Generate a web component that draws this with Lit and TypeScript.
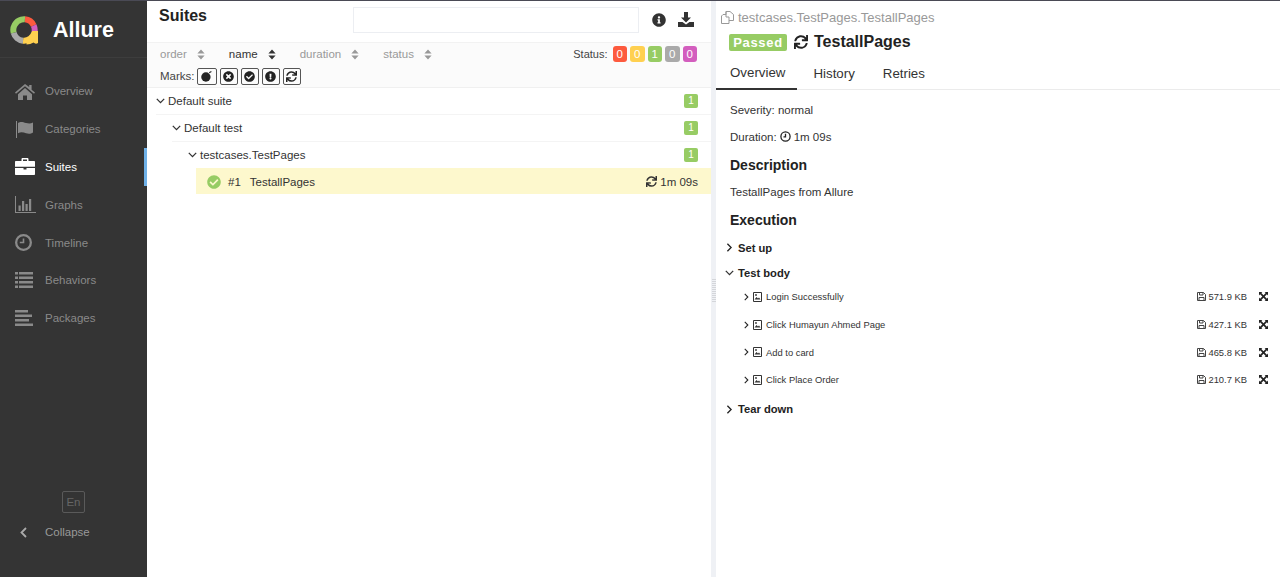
import { LitElement, html, css, svg } from "lit";
import { customElement } from "lit/decorators.js";

const SYNC = "M440.65 12.57l4 82.77A247.16 247.16 0 0 0 255.83 8C134.73 8 33.91 94.92 12.29 209.82A12 12 0 0 0 24.09 224h49.05a12 12 0 0 0 11.67-9.26 175.91 175.91 0 0 1 317-56.94l-101.46-4.86a12 12 0 0 0-12.57 12v47.41a12 12 0 0 0 12 12H500a12 12 0 0 0 12-12V12a12 12 0 0 0-12-12h-47.37a12 12 0 0 0-11.98 12.57zM255.83 432a175.61 175.61 0 0 1-146-77.8l101.8 4.87a12 12 0 0 0 12.57-12v-47.4a12 12 0 0 0-12-12H12a12 12 0 0 0-12 12V500a12 12 0 0 0 12 12h47.35a12 12 0 0 0 12-12.6l-4.15-82.57A247.17 247.17 0 0 0 255.83 504c121.11 0 221.93-86.92 243.55-201.82a12 12 0 0 0-11.8-14.18h-49.05a12 12 0 0 0-11.67 9.26A175.86 175.86 0 0 1 255.83 432z";
const CHECK = "M504 256c0 136.967-111.033 248-248 248S8 392.967 8 256 119.033 8 256 8s248 111.033 248 248zM227.314 387.314l184-184c6.248-6.248 6.248-16.379 0-22.627l-22.627-22.627c-6.248-6.249-16.379-6.249-22.628 0L216 308.118l-70.059-70.059c-6.248-6.248-16.379-6.248-22.628 0l-22.627 22.627c-6.248 6.248-6.248 16.379 0 22.627l104 104c6.249 6.249 16.379 6.249 22.628.001z";
const INFO = "M256 8C119.043 8 8 119.083 8 256c0 136.997 111.043 248 248 248s248-111.003 248-248C504 119.083 392.957 8 256 8zm0 110c23.196 0 42 18.804 42 42s-18.804 42-42 42-42-18.804-42-42 18.804-42 42-42zm56 254c0 6.627-5.373 12-12 12h-88c-6.627 0-12-5.373-12-12v-24c0-6.627 5.373-12 12-12h12v-64h-12c-6.627 0-12-5.373-12-12v-24c0-6.627 5.373-12 12-12h64c6.627 0 12 5.373 12 12v100h12c6.627 0 12 5.373 12 12v24z";
const TIMES = "M256 8C119 8 8 119 8 256s111 248 248 248 248-111 248-248S393 8 256 8zm121.6 313.1c4.7 4.7 4.7 12.3 0 17L338 377.6c-4.7 4.7-12.3 4.7-17 0L256 312l-65.1 65.6c-4.7 4.7-12.3 4.7-17 0L134.4 338c-4.7-4.7-4.7-12.3 0-17l65.6-65-65.6-65.1c-4.7-4.7-4.7-12.3 0-17l39.6-39.6c4.7-4.7 12.3-4.7 17 0l65 65.7 65.1-65.6c4.7-4.7 12.3-4.7 17 0l39.6 39.6c4.7 4.7 4.7 12.3 0 17L312 256l65.6 65.1z";
const EXCL = "M504 256c0 136.997-111.043 248-248 248S8 392.997 8 256C8 119.083 119.043 8 256 8s248 111.083 248 248zm-248 50c-25.405 0-46 20.595-46 46s20.595 46 46 46 46-20.595 46-46-20.595-46-46-46zm-43.673-165.346l7.418 136c.347 6.364 5.609 11.346 11.982 11.346h48.546c6.373 0 11.635-4.982 11.982-11.346l7.418-136c.375-6.874-5.098-12.654-11.982-12.654h-63.383c-6.884 0-12.356 5.78-11.981 12.654z";

const fa = (d: string, size: number, cls = "") =>
  html`<svg class=${cls} width=${size} height=${size} viewBox="0 0 512 512" fill="currentColor"><path d=${d}></path></svg>`;

const chevDown = html`<svg class="chev" width="9" height="6" viewBox="0 0 9 6" fill="none" stroke="#333" stroke-width="1.3"><path d="M.8.9l3.7 3.7L8.2.9"></path></svg>`;
const chevRight = (s = 6, h = 9) =>
  html`<svg class="chev" width=${s} height=${h} viewBox="0 0 6 9" fill="none" stroke="#222" stroke-width="1.3"><path d="M.9.8l3.7 3.7L.9 8.2"></path></svg>`;

const sortIcon = (active = false) =>
  html`<svg class="sort" width="8" height="11" viewBox="0 0 8 11" fill=${active ? "#333" : "#999"}><path d="M4 .5l3.6 3.9H.4zM.4 6.6h7.2L4 10.5z"></path></svg>`;

const navIcons: Record<string, unknown> = {
  home: svg`<path d="M10 1L0 9.6l1 1.2L10 3.2l9 7.6 1-1.2-3.4-2.9V2h-2.4v1.9zM3 11.2V17h5v-4.6h4V17h5v-5.8L10 5z"/>`,
  flag: svg`<path d="M1 0h1v17H1zM3 2c3-2 5-.8 8 0s5 .6 7-.6v10c-2 1.5-4.6 1.6-7 .8s-5-1.8-8 0z"/>`,
  case: svg`<path d="M6.5 3V1.2C6.5.5 7 0 7.7 0h4.6c.7 0 1.2.5 1.2 1.2V3H19c.6 0 1 .4 1 1v4.8H0V4c0-.6.4-1 1-1zM8 3h4V1.5H8zM0 10h8.5v1.5h3V10H20v6c0 .6-.4 1-1 1H1c-.6 0-1-.4-1-1z"/>`,
  chart: svg`<path d="M0 0h1v16h20v1H0zM3.5 9.5h2.2V15H3.5zM7 5h2.2v10H7zM10.5 8h2.2v7h-2.2zM14 3h2.2v12H14z"/>`,
  clock: svg`<path fill-rule="evenodd" d="M8.5 0a8.5 8.5 0 1 1 0 17 8.5 8.5 0 0 1 0-17zm0 2.3a6.2 6.2 0 1 0 0 12.4 6.2 6.2 0 0 0 0-12.4zM7.7 4.5h1.6v4.8H4.8V7.7h2.9z"/>`,
  list: svg`<path d="M0 0h3v2.5H0zM4 0h14v2.5H4zM0 4.5h3V7H0zM4 4.5h14V7H4zM0 9h3v2.5H0zM4 9h14v2.5H4zM0 13.5h3V16H0zM4 13.5h14V16H4z"/>`,
  pack: svg`<path d="M0 0h13v2.5H0zM0 4.5h17V7H0zM0 9h14v2.5H0zM0 13.5h18V16H0z"/>`,
};

const nav = [
  { label: "Overview", icon: "home" },
  { label: "Categories", icon: "flag" },
  { label: "Suites", icon: "case", active: true },
  { label: "Graphs", icon: "chart" },
  { label: "Timeline", icon: "clock" },
  { label: "Behaviors", icon: "list" },
  { label: "Packages", icon: "pack" },
];

const ringParts = [
  { color: "#fd5a3e", from: -85, to: -25 },
  { color: "#d35ebe", from: -25, to: 15 },
  { color: "#ffd050", from: 15, to: 95 },
  { color: "#aaaaaa", from: 95, to: 165 },
  { color: "#97cc64", from: 165, to: 275 },
];

const statuses = [
  { n: 0, color: "#fd5a3e" },
  { n: 0, color: "#ffd050" },
  { n: 1, color: "#97cc64" },
  { n: 0, color: "#aaaaaa" },
  { n: 0, color: "#d35ebe" },
];

const steps = [
  { name: "Login Successfully", size: "571.9 KB" },
  { name: "Click Humayun Ahmed Page", size: "427.1 KB" },
  { name: "Add to card", size: "465.8 KB" },
  { name: "Click Place Order", size: "210.7 KB" },
];

const imageIcon = html`<svg class="file" width="9" height="10" viewBox="0 0 9 10" fill="none" stroke="#333"><path d="M.5.5h8v9h-8z"></path><path d="M1.5 7.5l2-2.5 1.5 1.5L6 5.5l1.5 2z" fill="#333" stroke="none"></path><circle cx="3" cy="3" r=".9" fill="#333" stroke="none"></circle></svg>`;
const saveIcon = html`<svg class="file" width="9" height="9" viewBox="0 0 9 9" fill="none" stroke="#444"><path d="M.5.5h6l2 2v6h-8z"></path><path d="M2.5.5V3H6V.5M2 8.5v-3h5v3"></path></svg>`;
const expandIcon = html`<svg width="9" height="9" viewBox="0 0 9 9" fill="#222"><path d="M0 0h3.4L2.3 1.1l2.2 2.2 2.2-2.2L5.6 0H9v3.4L7.9 2.3 5.7 4.5l2.2 2.2L9 5.6V9H5.6l1.1-1.1-2.2-2.2-2.2 2.2L3.4 9H0V5.6l1.1 1.1 2.2-2.2-2.2-2.2L0 3.4z"></path></svg>`;

@customElement("app-root")
export class AppRoot extends LitElement {
  static styles = css`
    :host {
      display: flex;
      height: 577px;
      overflow: hidden;
      position: relative;
      font-family: "Liberation Sans", Arial, sans-serif;
      font-size: 11.5px;
      color: #333;
      background: #fff;
    }
    .topline {
      position: absolute;
      top: 0;
      left: 0;
      right: 0;
      height: 1px;
      background: #4a4a55;
    }
    svg {
      flex: none;
      display: block;
    }

    /* side nav */
    .side {
      width: 147px;
      flex: none;
      background: #343434;
      display: flex;
      flex-direction: column;
      color: #8a8a8a;
    }
    .brand {
      height: 58px;
      flex: none;
      display: flex;
      align-items: center;
      gap: 15px;
      padding: 3px 0 0 10px;
      box-sizing: border-box;
      border-bottom: 1px solid #3d3d3d;
      color: #fff;
      font-size: 21.5px;
      font-weight: bold;
    }
    .nav {
      margin-top: 14.5px;
      flex: 1;
    }
    .nav-item {
      height: 37.8px;
      display: flex;
      align-items: center;
      padding-left: 15px;
      box-sizing: border-box;
    }
    .nav-item .ico {
      width: 30px;
      flex: none;
    }
    .nav-item.active {
      color: #fff;
      border-right: 3px solid #6fb1e8;
    }
    .lang {
      width: 23px;
      height: 22px;
      box-sizing: border-box;
      border: 1px solid #5a5a5a;
      border-radius: 2px;
      margin-left: 62px;
      display: flex;
      align-items: center;
      justify-content: center;
      color: #666;
    }
    .collapse {
      height: 38px;
      margin: 0 0 26px;
      padding: 0 0 0 20px;
      display: flex;
      align-items: center;
      gap: 18px;
      color: #999;
      box-sizing: border-box;
    }

    /* suites column */
    .suites {
      width: 564px;
      flex: none;
      display: flex;
      flex-direction: column;
    }
    .suites-head {
      height: 43px;
      flex: none;
      display: flex;
      padding: 7px 0 0 12px;
      box-sizing: border-box;
      border-bottom: 1px solid #f2f2f2;
    }
    .suites-head h2 {
      margin: 0;
      font-size: 16px;
      line-height: 18px;
      color: #222;
      width: 194px;
    }
    .search {
      width: 286px;
      height: 26px;
      box-sizing: border-box;
      border: 1px solid #eceef2;
    }
    .head-icons {
      display: flex;
      gap: 12px;
      padding: 6px 0 0 13px;
      color: #333;
      align-items: flex-start;
    }
    .head-icons .dl {
      margin-top: -1px;
    }
    .toolbar {
      height: 45px;
      flex: none;
      background: #fbfbfb;
      border-bottom: 1px solid #f0f0f0;
      padding: 0 14px 0 13px;
      box-sizing: border-box;
    }
    .sort-row {
      height: 22px;
      display: flex;
      align-items: center;
      color: #999;
    }
    .sorter {
      display: flex;
      align-items: center;
      gap: 10px;
      margin-right: 24px;
    }
    .sorter.active {
      color: #333;
    }
    .status {
      margin-left: auto;
      display: flex;
      align-items: center;
      gap: 3px;
      color: #444;
    }
    .status .lbl {
      margin-right: 2px;
      font-size: 11px;
    }
    .pill {
      width: 14.5px;
      height: 16px;
      border-radius: 3px;
      color: #fff;
      display: flex;
      align-items: center;
      justify-content: center;
    }
    .marks {
      height: 22px;
      display: flex;
      align-items: center;
      gap: 3px;
      color: #444;
    }
    .mark {
      width: 18px;
      height: 17px;
      border: 1px solid #555;
      border-radius: 2px;
      box-sizing: border-box;
      display: flex;
      align-items: center;
      justify-content: center;
      color: #222;
    }
    .mark.wide {
      width: 20px;
      margin-left: -1px;
    }
    .row {
      height: 26.8px;
      display: flex;
      align-items: center;
      box-sizing: border-box;
      padding-right: 13px;
    }
    .row .chev {
      margin-right: 3px;
    }
    .row .count {
      margin-left: auto;
      width: 14px;
      height: 14px;
      border-radius: 2px;
      background: #97cc64;
      color: #fff;
      font-size: 10px;
      display: flex;
      align-items: center;
      justify-content: center;
    }
    .row-line {
      border-bottom: 1px solid #f4f4f4;
    }
    .lvl1 {
      margin-left: 9px;
    }
    .lvl2 {
      margin-left: 25px;
    }
    .lvl3 {
      margin-left: 41px;
    }
    .selected {
      margin-left: 49px;
      background: #fdf8cd;
      padding-left: 11px;
      padding-top: 1px;
      gap: 7px;
      height: 26px;
    }
    .selected .ok {
      color: #97cc64;
    }
    .selected .time {
      margin-left: auto;
      display: flex;
      align-items: center;
      gap: 3px;
    }
    .selected .id {
      margin-right: 2px;
    }

    .splitter {
      width: 5px;
      flex: none;
      background: #eff1f5;
      position: relative;
    }
    .grip {
      position: absolute;
      top: 278px;
      left: 1px;
      width: 4px;
      height: 24px;
      background: repeating-linear-gradient(0deg, #d4d6da 0 1px, transparent 1px 2px);
    }

    /* test detail */
    .detail {
      flex: 1;
      min-width: 0;
      display: flex;
      flex-direction: column;
    }
    .crumb {
      height: 25px;
      flex: none;
      padding: 9px 0 0 5px;
      box-sizing: border-box;
      display: flex;
      align-items: center;
      gap: 3px;
      color: #999;
      font-size: 13px;
    }
    .title {
      height: 34px;
      flex: none;
      display: flex;
      align-items: center;
      padding-left: 13px;
      gap: 6.5px;
      font-size: 16px;
      font-weight: bold;
      color: #222;
    }
    .passed {
      width: 58px;
      height: 17px;
      border-radius: 2px;
      background: #97cc64;
      color: #fff;
      font-size: 13px;
      letter-spacing: 0.7px;
      text-align: center;
      line-height: 17px;
    }
    .tabs {
      height: 31px;
      flex: none;
      display: flex;
      border-bottom: 1px solid #ebebeb;
      font-size: 13.3px;
      box-sizing: border-box;
    }
    .tab {
      display: flex;
      align-items: center;
      justify-content: center;
      padding: 0 12px 2px 14px;
      height: 30px;
      box-sizing: border-box;
      margin-right: 2px;
    }
    .tab.active {
      border-bottom: 2px solid #333;
      height: 31px;
      padding-bottom: 3px;
    }
    .body {
      padding: 6px 12px 0 14px;
    }
    .para {
      height: 27px;
      display: flex;
      align-items: center;
      gap: 3px;
    }
    .body h3 {
      margin: 0;
      height: 28px;
      box-sizing: border-box;
      padding-top: 2px;
      display: flex;
      align-items: center;
      font-size: 14px;
      color: #222;
    }
    .stage {
      height: 25px;
      margin-left: -5px;
      display: flex;
      align-items: center;
      gap: 4px;
      font-weight: bold;
      font-size: 11.2px;
      color: #222;
    }
    .stage.first {
      margin-top: 2px;
    }
    .stage .chev {
      width: 9px;
      flex: none;
    }
    .step {
      height: 27.7px;
      display: flex;
      align-items: center;
      padding-left: 14px;
      font-size: 9.4px;
      gap: 4px;
    }
    .step .size {
      margin-left: auto;
      display: flex;
      align-items: center;
      gap: 2px;
      margin-right: 8px;
    }
    .steps {
      margin: -2px 0 3px;
    }
  `;

  renderLogo() {
    return html`<svg width="28" height="29" viewBox="0 0 28 29" fill="none">
      ${ringParts.map(
        (p) => svg`<circle cx="14" cy="14" r="10.7" stroke=${p.color} stroke-width="6"
          pathLength="360" stroke-dasharray="${p.to - p.from} 360" transform="rotate(${p.from} 14 14)"/>`
      )}
      <path d="M22 15h6v12q-2.5 1.5-4.5-.5q-3 2-7 2v-5a8 8 0 0 0 5.5-8.5z" fill="#ffd050"></path>
    </svg>`;
  }

  render() {
    return html`
      <aside class="side">
        <div class="brand">${this.renderLogo()}<span>Allure</span></div>
        <div class="nav">
          ${nav.map(
            (n) => html`<div class="nav-item ${n.active ? "active" : ""}">
              <span class="ico"><svg width="21" height="17" viewBox="0 0 21 17" fill="currentColor">${navIcons[n.icon]}</svg></span>
              ${n.label}
            </div>`
          )}
        </div>
        <div class="lang">En</div>
        <div class="collapse">
          <svg width="7" height="11" viewBox="0 0 7 11" fill="none" stroke="#aaa" stroke-width="1.8"><path d="M6 1L1.5 5.5 6 10"></path></svg>
          Collapse
        </div>
      </aside>

      <section class="suites">
        <div class="suites-head">
          <h2>Suites</h2>
          <div class="search"></div>
          <div class="head-icons">
            ${fa(INFO, 14)}
            <svg class="dl" width="16" height="15" viewBox="0 0 16 15" fill="currentColor"><path d="M6 0h4v5.5h3l-5 5-5-5h3zM0 10h4.5L8 12.5 11.5 10H16v5H0z"></path></svg>
          </div>
        </div>
        <div class="toolbar">
          <div class="sort-row">
            <span class="sorter">order ${sortIcon()}</span>
            <span class="sorter active">name ${sortIcon(true)}</span>
            <span class="sorter">duration ${sortIcon()}</span>
            <span class="sorter">status ${sortIcon()}</span>
            <span class="status">
              <span class="lbl">Status:</span>
              ${statuses.map((s) => html`<span class="pill" style="background:${s.color}">${s.n}</span>`)}
            </span>
          </div>
          <div class="marks">
            Marks:
            <span class="mark wide"><svg width="12" height="11" viewBox="0 0 11 10" fill="currentColor"><circle cx="4.5" cy="5.5" r="4.3"></circle><path d="M7.5 1.5l2-1" stroke="currentColor" fill="none"></path></svg></span>
            <span class="mark">${fa(TIMES, 11)}</span>
            <span class="mark">${fa(CHECK, 11)}</span>
            <span class="mark">${fa(EXCL, 11)}</span>
            <span class="mark">${fa(SYNC, 11)}</span>
          </div>
        </div>
        <div class="row row-line lvl1">${chevDown}<span>Default suite</span><span class="count">1</span></div>
        <div class="row row-line lvl2">${chevDown}<span>Default test</span><span class="count">1</span></div>
        <div class="row lvl3">${chevDown}<span>testcases.TestPages</span><span class="count">1</span></div>
        <div class="row selected">
          ${fa(CHECK, 14, "ok")}
          <span class="id">#1</span>
          <span>TestallPages</span>
          <span class="time">${fa(SYNC, 11)} 1m 09s</span>
        </div>
      </section>

      <div class="splitter"><div class="grip"></div></div>

      <section class="detail">
        <div class="crumb">
          <svg width="14" height="13" viewBox="0 0 14 13" fill="none" stroke="#999"><path d="M5 .5h4l3.5 3v6H8M5 .5v3H2L.5 5v7.5H8V6H5z"></path></svg>
          testcases.TestPages.TestallPages
        </div>
        <div class="title">
          <span class="passed">Passed</span>
          ${fa(SYNC, 14)}
          <span>TestallPages</span>
        </div>
        <div class="tabs">
          <div class="tab active">Overview</div>
          <div class="tab">History</div>
          <div class="tab">Retries</div>
        </div>
        <div class="body">
          <div class="para">Severity: normal</div>
          <div class="para">
            Duration:
            <svg width="11" height="11" viewBox="0 0 11 11" fill="none" stroke="#222" stroke-width="1.3"><circle cx="5.5" cy="5.5" r="4.6"></circle><path d="M5.5 2.8v3h-2"></path></svg>
            1m 09s
          </div>
          <h3>Description</h3>
          <div class="para">TestallPages from Allure</div>
          <h3>Execution</h3>
          <div class="stage first">${chevRight()}Set up</div>
          <div class="stage">${chevDown}Test body</div>
          <div class="steps">
            ${steps.map(
              (s) => html`<div class="step">
                ${chevRight(5, 8)} ${imageIcon}
                <span>${s.name}</span>
                <span class="size">${saveIcon} ${s.size}</span>
                ${expandIcon}
              </div>`
            )}
          </div>
          <div class="stage">${chevRight()}Tear down</div>
        </div>
      </section>
      <div class="topline"></div>
    `;
  }
}

declare global {
  interface HTMLElementTagNameMap {
    "app-root": AppRoot;
  }
}
